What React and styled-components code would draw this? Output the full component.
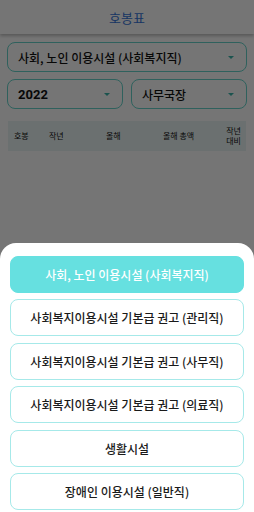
import React from 'react';
import styled, { createGlobalStyle } from 'styled-components';

const Global = createGlobalStyle`
  html, body {
    margin: 0;
    padding: 0;
    background: #ffffff;
    font-family: "Noto Sans CJK KR", sans-serif;
  }
  * { box-sizing: border-box; }
`;

const Screen = styled.div`
  position: relative;
  width: 254px;
  height: 512px;
  overflow: hidden;
  background: #ffffff;
`;

const Header = styled.div`
  height: 34px;
  display: flex;
  align-items: center;
  justify-content: center;
  background: #ffffff;
  box-shadow: 0 2px 3px rgba(0, 0, 0, 0.25);
  color: #3674d8;
  font-size: 13px;
`;

const Filters = styled.div`
  padding: 8px 7px 0;
  display: flex;
  flex-direction: column;
  gap: 7px;
`;

const FilterRow = styled.div`
  display: flex;
  gap: 8px;
`;

const Select = styled.div`
  flex: 1 1 auto;
  width: 100%;
  height: 30px;
  display: flex;
  align-items: center;
  justify-content: space-between;
  padding: 0 12px 0 10px;
  border: 1px solid #66d4cb;
  border-radius: 8px;
  background: #ffffff;
  color: #111;
  font-family: ${(p) => (p.$bold ? 'Roboto, sans-serif' : '"Noto Sans CJK KR", sans-serif')};
  font-size: ${(p) => (p.$bold ? '13px' : '12px')};
  font-weight: ${(p) => (p.$bold ? 700 : 500)};
`;

const Caret = styled.span`
  width: 0;
  height: 0;
  border-left: 3px solid transparent;
  border-right: 3px solid transparent;
  border-top: 3px solid #3bb5ab;
`;

const TableHead = styled.div`
  margin: 12px 8px 0;
  height: 30px;
  display: grid;
  grid-template-columns: 35px 57px 57px 58px 1fr;
  align-items: center;
  padding-left: 6px;
  background: #eaf5f4;
  color: #111;
  font-size: 8px;
  line-height: 10px;
`;

const Th = styled.span`
  white-space: nowrap;
  text-align: ${(p) => p.$align || 'left'};
`;

const Overlay = styled.div`
  position: absolute;
  inset: 0;
  background: rgba(0, 0, 0, 0.54);
`;

const Sheet = styled.div`
  position: absolute;
  left: 0;
  right: 0;
  top: 243px;
  bottom: 0;
  background: #ffffff;
  border-radius: 16px 16px 0 0;
  padding: 13px 10px 0;
  display: flex;
  flex-direction: column;
  gap: 6.4px;
`;

const Option = styled.div`
  height: 37px;
  flex-shrink: 0;
  display: flex;
  align-items: center;
  justify-content: center;
  border-radius: 8px;
  border: 1px solid ${(p) => (p.$active ? '#66e0e0' : '#a6e9e9')};
  background: ${(p) => (p.$active ? '#66e0e0' : '#ffffff')};
  color: ${(p) => (p.$active ? '#ffffff' : '#1a1a1a')};
  font-size: 12px;
  font-weight: 500;
`;

const options = [
  '사회, 노인 이용시설 (사회복지직)',
  '사회복지이용시설 기본급 권고 (관리직)',
  '사회복지이용시설 기본급 권고 (사무직)',
  '사회복지이용시설 기본급 권고 (의료직)',
  '생활시설',
  '장애인 이용시설 (일반직)',
];

export default function App() {
  return (
    <Screen>
      <Global />
      <Header>호봉표</Header>
      <Filters>
        <Select>
          사회, 노인 이용시설 (사회복지직)
          <Caret />
        </Select>
        <FilterRow>
          <Select $bold>
            2022
            <Caret />
          </Select>
          <Select>
            사무국장
            <Caret />
          </Select>
        </FilterRow>
      </Filters>
      <TableHead>
        <Th>호봉</Th>
        <Th>작년</Th>
        <Th>올해</Th>
        <Th>올해 총액</Th>
        <Th $align="center">
          작년
          <br />
          대비
        </Th>
      </TableHead>
      <Overlay />
      <Sheet>
        {options.map((o, i) => (
          <Option key={o} $active={i === 0}>
            {o}
          </Option>
        ))}
      </Sheet>
    </Screen>
  );
}
